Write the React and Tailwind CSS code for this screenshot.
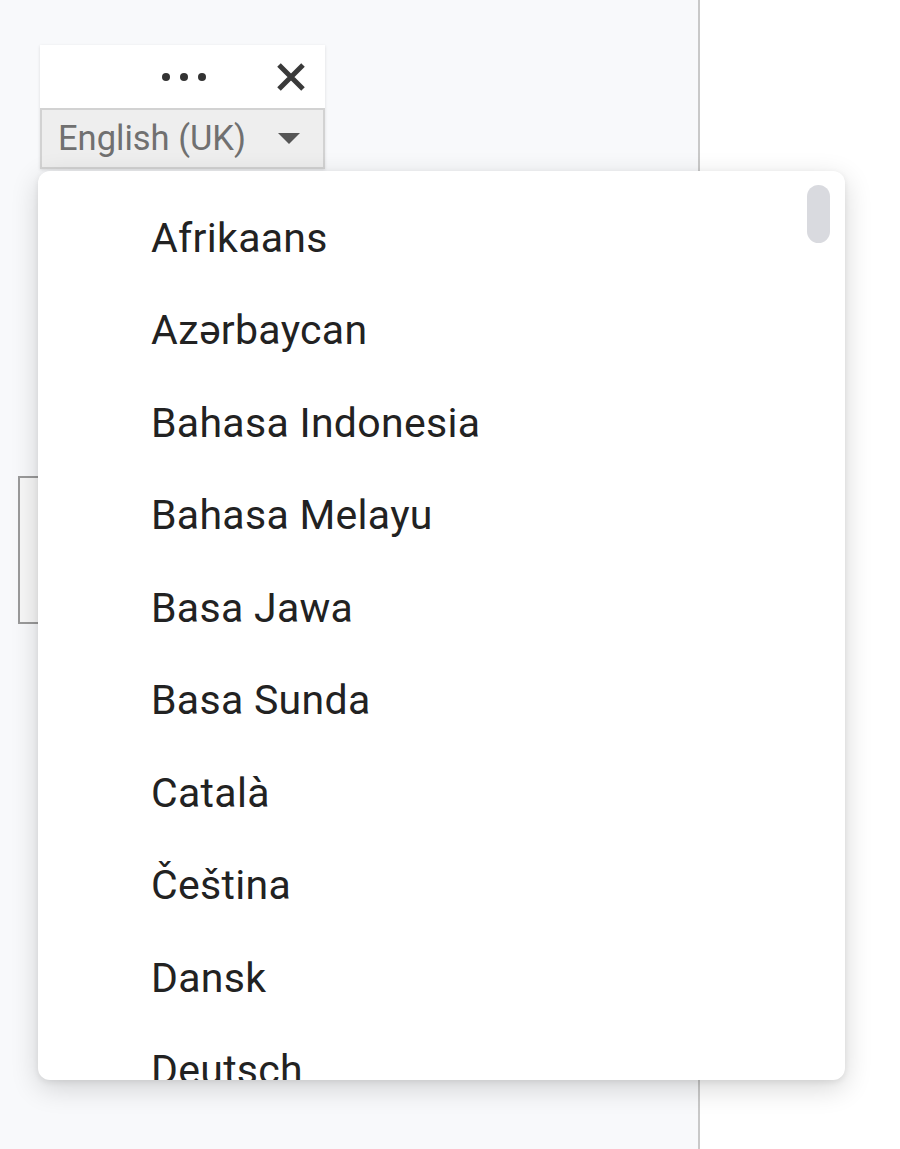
import React from "react";

const langs = [
  "Afrikaans",
  "Azərbaycan",
  "Bahasa Indonesia",
  "Bahasa Melayu",
  "Basa Jawa",
  "Basa Sunda",
  "Català",
  "Čeština",
  "Dansk",
  "Deutsch",
];

export default function App() {
  return (
    <div className="relative flex h-[1149px] w-[900px] overflow-hidden bg-white" style={{ fontFamily: "Roboto, 'Noto Sans', sans-serif" }}>
      <div className="flex h-full w-[700px] flex-col border-r-[2px] border-[#c9c9c9] bg-[#f8f9fb]">
        <div className="ml-[40px] mt-[45px] w-[285px] shadow-[0_1px_3px_rgba(0,0,0,0.12)]">
          <div className="flex h-[63px] items-center bg-white">
            <div className="ml-[122px] flex items-center gap-[10px]">
              <span className="h-[8px] w-[8px] rounded-full bg-[#333]" />
              <span className="h-[8px] w-[8px] rounded-full bg-[#333]" />
              <span className="h-[8px] w-[8px] rounded-full bg-[#333]" />
            </div>
            <svg className="ml-[70px]" width="30" height="30" viewBox="0 0 30 30">
              <path d="M3 3 L27 27 M27 3 L3 27" stroke="#3a3a3a" strokeWidth="5" strokeLinecap="butt" />
            </svg>
          </div>
          <div className="flex h-[61px] items-center border-[2px] border-[#d2d2d2] bg-[#eeeeee] pl-[16px]">
            <span className="text-[34.5px] leading-none text-[#707070]">English (UK)</span>
            <svg className="ml-[32px]" width="22" height="11" viewBox="0 0 22 11">
              <path d="M0 0 L22 0 L11 11 Z" fill="#555" />
            </svg>
          </div>
        </div>
        <div className="ml-[18px] mt-[307px] h-[148px] w-[400px] border-[2px] border-[#9a9a9a] bg-[#f7f7f7]" />
      </div>

      <div className="absolute left-[38px] top-[171px] h-[909px] w-[807px] overflow-hidden rounded-[12px] bg-white shadow-[0_8px_28px_rgba(0,0,0,0.16),0_2px_6px_rgba(0,0,0,0.08)]">
        <div className="flex flex-col pt-[21px]">
          {langs.map((l) => (
            <div key={l} className="flex h-[92.5px] shrink-0 items-center pl-[113px] text-[41px] leading-none tracking-[0.3px] text-[#222]">
              {l}
            </div>
          ))}
        </div>
        <div className="absolute right-[15px] top-[14px] h-[58px] w-[23px] rounded-full bg-[#d9dadf]" />
      </div>
    </div>
  );
}
